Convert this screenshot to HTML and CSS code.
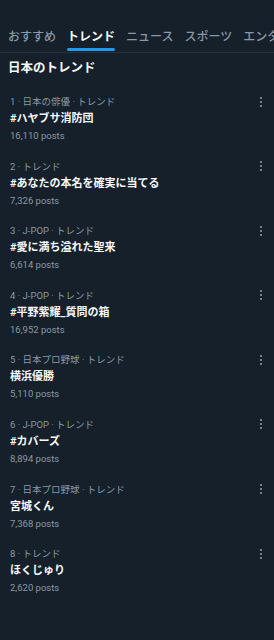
FILE: index.html
```html
<!DOCTYPE html>
<html lang="ja">
<head>
<meta charset="utf-8">
<link rel="stylesheet" href="styles.css">
</head>
<body>
<nav class="tabs">
  <div class="tab">おすすめ</div>
  <div class="tab active">トレンド</div>
  <div class="tab">ニュース</div>
  <div class="tab">スポーツ</div>
  <div class="tab">エンタメ</div>
</nav>
<h1 class="heading">日本のトレンド</h1>
<ul class="list">
  <li class="item"><div class="meta">1 · 日本の俳優 · トレンド</div><div class="title">#ハヤブサ消防団</div><div class="posts">16,110 posts</div><svg class="more" width="4" height="12" viewBox="0 0 4 12"><circle cx="2" cy="2" r="1.1"/><circle cx="2" cy="6" r="1.1"/><circle cx="2" cy="10" r="1.1"/></svg></li>
  <li class="item"><div class="meta">2 · トレンド</div><div class="title">#あなたの本名を確実に当てる</div><div class="posts">7,326 posts</div><svg class="more" width="4" height="12" viewBox="0 0 4 12"><circle cx="2" cy="2" r="1.1"/><circle cx="2" cy="6" r="1.1"/><circle cx="2" cy="10" r="1.1"/></svg></li>
  <li class="item"><div class="meta">3 · J-POP · トレンド</div><div class="title">#愛に満ち溢れた聖来</div><div class="posts">6,614 posts</div><svg class="more" width="4" height="12" viewBox="0 0 4 12"><circle cx="2" cy="2" r="1.1"/><circle cx="2" cy="6" r="1.1"/><circle cx="2" cy="10" r="1.1"/></svg></li>
  <li class="item"><div class="meta">4 · J-POP · トレンド</div><div class="title">#平野紫耀_質問の箱</div><div class="posts">16,952 posts</div><svg class="more" width="4" height="12" viewBox="0 0 4 12"><circle cx="2" cy="2" r="1.1"/><circle cx="2" cy="6" r="1.1"/><circle cx="2" cy="10" r="1.1"/></svg></li>
  <li class="item"><div class="meta">5 · 日本プロ野球 · トレンド</div><div class="title">横浜優勝</div><div class="posts">5,110 posts</div><svg class="more" width="4" height="12" viewBox="0 0 4 12"><circle cx="2" cy="2" r="1.1"/><circle cx="2" cy="6" r="1.1"/><circle cx="2" cy="10" r="1.1"/></svg></li>
  <li class="item"><div class="meta">6 · J-POP · トレンド</div><div class="title">#カバーズ</div><div class="posts">8,894 posts</div><svg class="more" width="4" height="12" viewBox="0 0 4 12"><circle cx="2" cy="2" r="1.1"/><circle cx="2" cy="6" r="1.1"/><circle cx="2" cy="10" r="1.1"/></svg></li>
  <li class="item"><div class="meta">7 · 日本プロ野球 · トレンド</div><div class="title">宮城くん</div><div class="posts">7,368 posts</div><svg class="more" width="4" height="12" viewBox="0 0 4 12"><circle cx="2" cy="2" r="1.1"/><circle cx="2" cy="6" r="1.1"/><circle cx="2" cy="10" r="1.1"/></svg></li>
  <li class="item"><div class="meta">8 · トレンド</div><div class="title">ほくじゅり</div><div class="posts">2,620 posts</div><svg class="more" width="4" height="12" viewBox="0 0 4 12"><circle cx="2" cy="2" r="1.1"/><circle cx="2" cy="6" r="1.1"/><circle cx="2" cy="10" r="1.1"/></svg></li>
</ul>
</body>
</html>
```
FILE: styles.css
```css
html, body {
  margin: 0;
  padding: 0;
  background: #15202b;
}
body {
  width: 274px;
  height: 640px;
  overflow: hidden;
  font-family: Roboto, "Noto Sans CJK JP", sans-serif;
  color: #f7f9f9;
}
.tabs {
  display: flex;
  gap: 11px;
  padding: 0 0 0 8px;
  height: 52px;
  border-bottom: 1px solid #26323e;
  white-space: nowrap;
  overflow: hidden;
}
.tab {
  flex: none;
  font-size: 12px;
  line-height: 16px;
  padding-top: 29px;
  color: #8b98a5;
  font-weight: 500;
  box-sizing: border-box;
  height: 52px;
  position: relative;
}
.tab.active {
  color: #f7f9f9;
  font-weight: 700;
}
.tab.active::after {
  content: "";
  position: absolute;
  left: 0;
  right: 0;
  bottom: 1px;
  height: 3px;
  border-radius: 2px;
  background: #1d9bf0;
}
.heading {
  margin: 0;
  padding: 5px 8px 0;
  font-size: 12.5px;
  line-height: 20px;
  font-weight: 700;
}
.list {
  list-style: none;
  margin: 0;
  padding: 8px 0 0;
}
.item {
  position: relative;
  padding: 7px 10px 6.6px;
}
.meta, .posts {
  font-size: 9.5px;
  line-height: 17px;
  color: #8b98a5;
}
.title {
  font-size: 11px;
  line-height: 17px;
  font-weight: 700;
}
.more {
  position: absolute;
  right: 11px;
  top: 9.5px;
  fill: #8b98a5;
}
```
